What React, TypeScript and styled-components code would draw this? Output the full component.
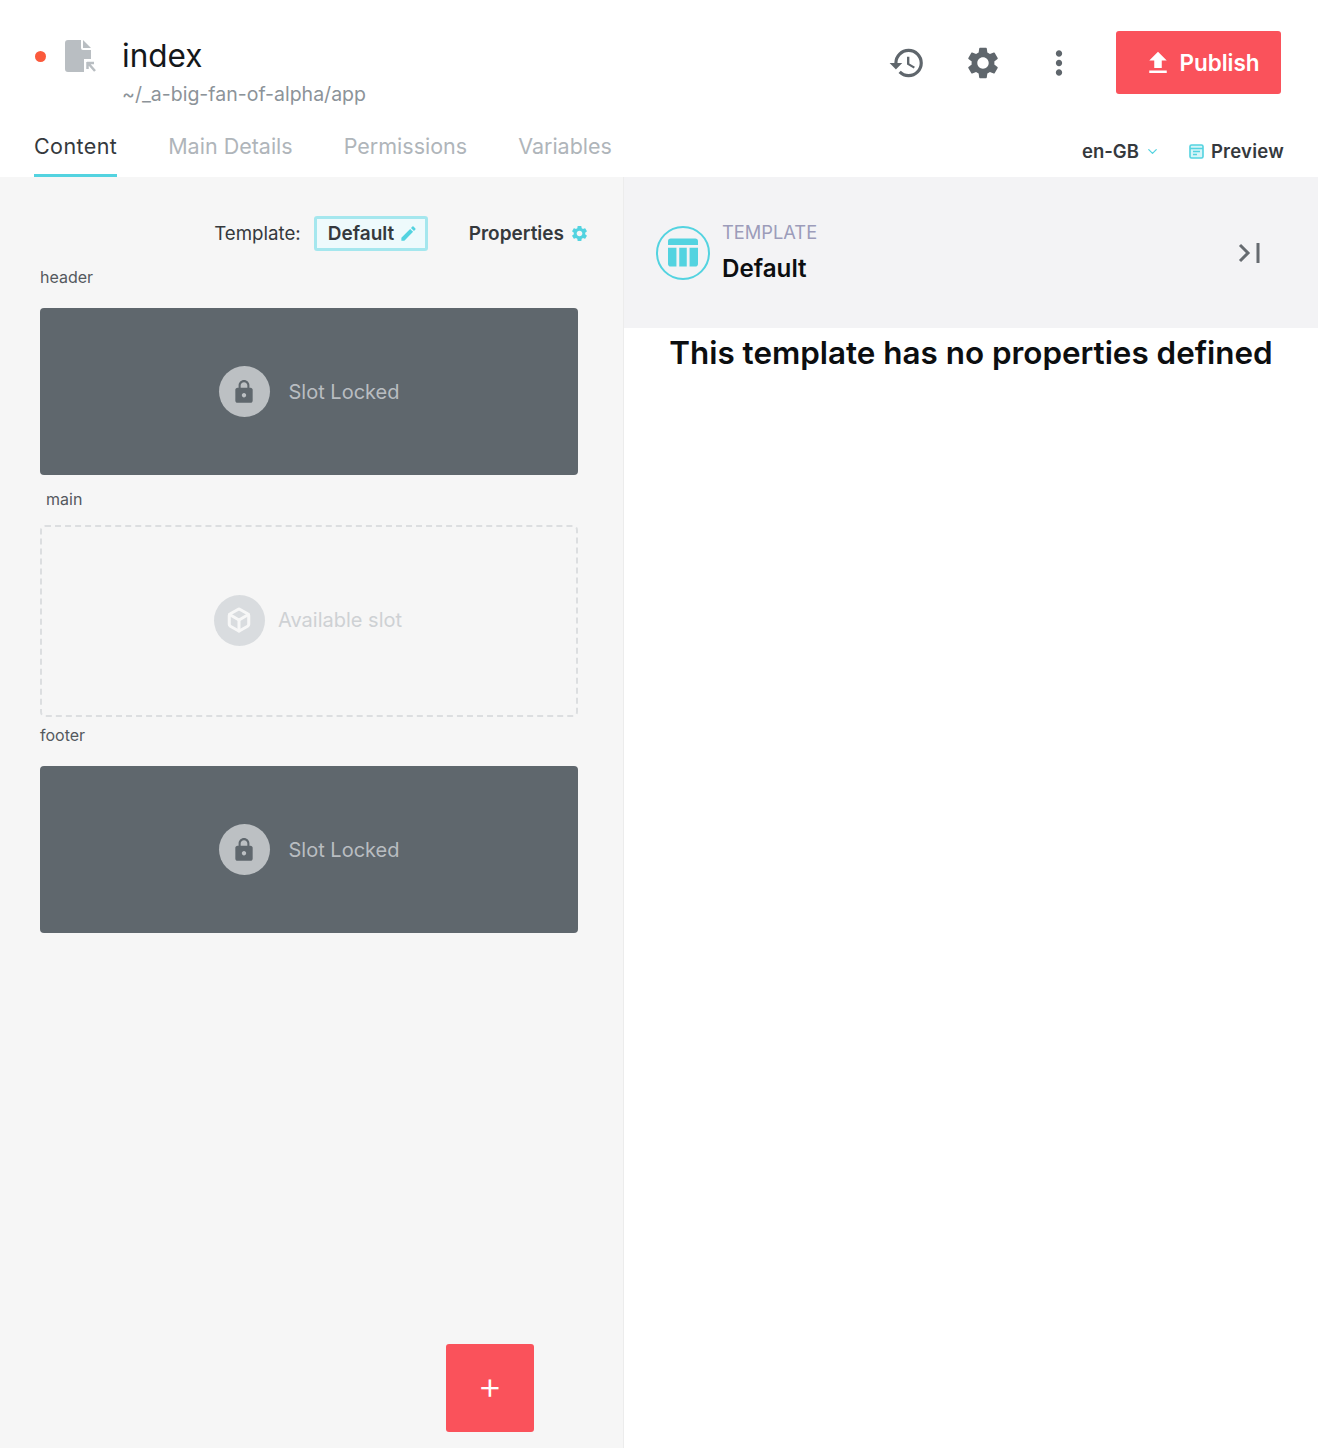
import { MdEdit, MdFileUpload, MdHistory, MdLock, MdMoreVert, MdSettings } from "react-icons/md";
import { FiBox, FiChevronDown } from "react-icons/fi";
import styled, { createGlobalStyle } from "styled-components";

const GlobalStyle = createGlobalStyle`
    html, body {
        margin: 0;
        padding: 0;
        background: #fff;
    }
    body {
        font-family: Inter, "Noto Sans", sans-serif;
        color: #35393d;
    }
`;

const Page = styled.div`
    display: flex;
    flex-direction: column;
    width: 1318px;
    height: 1448px;
    overflow: hidden;
`;

const Header = styled.header`
    display: flex;
    flex-direction: column;
    height: 177px;
    box-sizing: border-box;
    background: #fff;
`;

const TopRow = styled.div`
    display: flex;
    align-items: flex-start;
    height: 98px;
    padding: 31px 37px 0 35px;
    box-sizing: border-box;
`;

const Dot = styled.span`
    width: 11px;
    height: 11px;
    margin-top: 20px;
    border-radius: 50%;
    background: #fb5a3c;
`;

const FileIcon = styled.svg`
    width: 31px;
    height: 32px;
    margin: 9px 0 0 19px;
`;

const TitleBlock = styled.div`
    display: flex;
    flex-direction: column;
    margin-left: 26px;
`;

const Title = styled.h1`
    margin: 5px 0 0;
    font-size: 31.5px;
    line-height: 40px;
    font-weight: 400;
    color: #14171a;
`;

const Path = styled.div`
    margin-top: 7px;
    font-size: 19.5px;
    line-height: 22px;
    color: #8c9399;
`;

const Actions = styled.div`
    display: flex;
    align-items: center;
    margin-left: auto;
    height: 63px;
`;

const ActionIcon = styled.span`
    display: flex;
    justify-content: center;
    width: 38px;
    margin-right: 38px;
    color: #5f666c;
    font-size: 38px;
`;

const PublishButton = styled.button`
    display: flex;
    align-items: center;
    justify-content: center;
    gap: 6px;
    width: 165px;
    height: 63px;
    padding: 0 0 0 6px;
    border: 0;
    border-radius: 3px;
    background: #fa525b;
    color: #fff;
    font: 600 22.5px Inter, sans-serif;
    cursor: pointer;
`;

const TabRow = styled.div`
    display: flex;
    align-items: flex-start;
    height: 79px;
    padding: 0 34px;
`;

const Tab = styled.a<{ $active?: boolean }>`
    display: flex;
    align-items: center;
    height: 46px;
    margin: 33px 51px 0 0;
    padding-bottom: 13px;
    box-sizing: border-box;
    font-size: 21.5px;
    letter-spacing: ${(p) => (p.$active ? "0.4px" : "0")};
    color: ${(p) => (p.$active ? "#35393d" : "#afb5ba")};
    border-bottom: 3px solid ${(p) => (p.$active ? "#53d3e0" : "transparent")};
`;

const TabTools = styled.div`
    display: flex;
    align-items: center;
    margin-left: auto;
    height: 46px;
    margin-top: 30px;
    font-size: 18.5px;
    font-weight: 600;
    color: #35393d;
`;

const Locale = styled.span`
    display: flex;
    align-items: center;
    gap: 6px;
    margin-right: 29px;

    svg {
        color: #53d3e0;
        font-size: 15px;
    }
`;

const Preview = styled.span`
    display: flex;
    align-items: center;
    gap: 7px;
    letter-spacing: 0.25px;
`;

const Main = styled.main`
    display: flex;
    flex: 1;
    min-height: 0;
`;

const LeftPanel = styled.section`
    position: relative;
    width: 624px;
    box-sizing: border-box;
    padding: 39px 45px 0 40px;
    background: #f6f6f6;
    border-right: 1px solid #ececec;
`;

const TemplateBar = styled.div`
    display: flex;
    align-items: center;
    height: 35px;
    margin: 0 -11px 10px 0;
    justify-content: flex-end;
    font-size: 19px;
`;

const BarLabel = styled.span`
    margin: 0 13px 1px 0;
    font-size: 18.7px;
`;

const DefaultChip = styled.span`
    display: flex;
    align-items: center;
    gap: 5px;
    width: 114px;
    height: 35px;
    box-sizing: border-box;
    padding: 0 0 1px 11px;
    margin-right: 41px;
    border: 3px solid #a5e7ee;
    border-radius: 3px;
    background: #eefafc;
    font-weight: 600;

    svg {
        color: #53d3e0;
        font-size: 19px;
    }
`;

const Properties = styled.span`
    display: flex;
    align-items: center;
    gap: 6px;
    padding-bottom: 1px;
    font-weight: 600;

    svg {
        color: #53d3e0;
        font-size: 19px;
    }
`;

const SlotLabel = styled.div<{ $indent?: boolean; $gap: number }>`
    height: 32px;
    display: flex;
    align-items: center;
    margin-bottom: ${(p) => p.$gap}px;
    padding-left: ${(p) => (p.$indent ? "6px" : "0")};
    font-size: 16px;
    color: #54595e;
`;

const LockedSlot = styled.div`
    display: flex;
    align-items: center;
    justify-content: center;
    gap: 19px;
    height: 167px;
    margin: 0 0 8px;
    border-radius: 4px;
    background: #5f676d;
    color: #b9bdc1;
    font-size: 20px;
`;

const EmptySlot = styled.div`
    display: flex;
    align-items: center;
    justify-content: center;
    gap: 13px;
    height: 192px;
    box-sizing: border-box;
    margin: 0 0 2px;
    padding: 0 2px 2px 0;
    border: 2px dashed #dcdee0;
    border-radius: 5px;
    color: #ced1d4;
    font-size: 20px;
`;

const SlotBadge = styled.span<{ $muted?: boolean }>`
    display: flex;
    align-items: center;
    justify-content: center;
    width: 51px;
    height: 51px;
    border-radius: 50%;
    background: ${(p) => (p.$muted ? "#d9dcdf" : "#bcc0c3")};
    color: ${(p) => (p.$muted ? "#f7f7f7" : "#5f676d")};
    font-size: 26px;
`;

const CubeIcon = styled(FiBox)`
    stroke-width: 2.8;
`;

const AddButton = styled.button`
    position: absolute;
    left: 446px;
    bottom: 16px;
    display: flex;
    align-items: center;
    justify-content: center;
    width: 88px;
    height: 88px;
    padding: 0 0 6px;
    border: 0;
    border-radius: 3px;
    background: #fa525b;
    color: #fff;
    font: 300 38px Inter, sans-serif;
    line-height: 1;
    cursor: pointer;
`;

const RightPanel = styled.section`
    flex: 1;
    display: flex;
    flex-direction: column;
    min-width: 0;
`;

const TemplateHead = styled.div`
    display: flex;
    align-items: center;
    height: 151px;
    flex-shrink: 0;
    padding: 0 58px 0 32px;
    box-sizing: border-box;
    background: #f3f3f5;
`;

const TemplateIcon = styled.span`
    display: flex;
    align-items: center;
    justify-content: center;
    width: 54px;
    height: 54px;
    box-sizing: border-box;
    border: 2px solid #53d3e0;
    border-radius: 50%;
`;

const TemplateText = styled.div`
    display: flex;
    flex-direction: column;
    margin: -3px 0 0 12px;
`;

const TemplateCaption = styled.span`
    font-size: 18.3px;
    line-height: 22px;
    color: #9c9cba;
`;

const TemplateName = styled.strong`
    margin-top: 13px;
    font-size: 24.2px;
    line-height: 26px;
    font-weight: 600;
    color: #0c0e10;
`;

const CollapseIcon = styled.svg`
    width: 22px;
    height: 22px;
    margin-left: auto;
`;

const EmptyMessage = styled.h2`
    margin: 6px 0 0;
    text-align: center;
    font-size: 31.4px;
    line-height: 38px;
    font-weight: 600;
    color: #0c0e10;
`;

const LockedContent = () => (
    <LockedSlot>
        <SlotBadge><MdLock /></SlotBadge>
        <span>Slot Locked</span>
    </LockedSlot>
);

export default function App() {
    return (
        <Page>
            <GlobalStyle />
            <Header>
                <TopRow>
                    <Dot />
                    <FileIcon viewBox="0 0 31 32">
                        <path fill="#b9bec2" d="M3 0h13v8a2 2 0 0 0 2 2h8v9h-7v13H3a3 3 0 0 1-3-3V3a3 3 0 0 1 3-3z" />
                        <path fill="#b9bec2" d="M18 0l8 8h-8z" />
                        <path fill="none" stroke="#b9bec2" strokeWidth="2.500" d="M22 23h7M22.500 22v7M23 23l7 8" />
                    </FileIcon>
                    <TitleBlock>
                        <Title>index</Title>
                        <Path>~/_a-big-fan-of-alpha/app</Path>
                    </TitleBlock>
                    <Actions>
                        <ActionIcon><MdHistory /></ActionIcon>
                        <ActionIcon><MdSettings /></ActionIcon>
                        <ActionIcon><MdMoreVert /></ActionIcon>
                        <PublishButton><MdFileUpload size={30} />Publish</PublishButton>
                    </Actions>
                </TopRow>
                <TabRow>
                    <Tab $active>Content</Tab>
                    <Tab>Main Details</Tab>
                    <Tab>Permissions</Tab>
                    <Tab>Variables</Tab>
                    <TabTools>
                        <Locale>en-GB <FiChevronDown /></Locale>
                        <Preview>
                            <svg width="15" height="15" viewBox="0 0 15 15">
                                <rect x="1" y="1" width="13" height="13" rx="1.500" fill="#d6f5f8" stroke="#53d3e0" strokeWidth="1.600" />
                                <path d="M1 4.500h13M4 7.500h7M4 10.500h4" stroke="#53d3e0" strokeWidth="1.400" />
                            </svg>
                            Preview
                        </Preview>
                    </TabTools>
                </TabRow>
            </Header>
            <Main>
                <LeftPanel>
                    <TemplateBar>
                        <BarLabel>Template:</BarLabel>
                        <DefaultChip>Default <MdEdit /></DefaultChip>
                        <Properties>Properties <MdSettings /></Properties>
                    </TemplateBar>
                    <SlotLabel $gap={15}>header</SlotLabel>
                    <LockedContent />
                    <SlotLabel $indent $gap={10}>main</SlotLabel>
                    <EmptySlot>
                        <SlotBadge $muted><CubeIcon /></SlotBadge>
                        <span>Available slot</span>
                    </EmptySlot>
                    <SlotLabel $gap={15}>footer</SlotLabel>
                    <LockedContent />
                    <AddButton>+</AddButton>
                </LeftPanel>
                <RightPanel>
                    <TemplateHead>
                        <TemplateIcon>
                            <svg width="30" height="29" viewBox="0 0 32 30">
                                <path fill="#53d3e0" d="M3 0h26a3 3 0 0 1 3 3v4H0V3a3 3 0 0 1 3-3zM0 10h9v20H3a3 3 0 0 1-3-3zM12 10h8v20h-8zM23 10h9v17a3 3 0 0 1-3 3h-6z" />
                            </svg>
                        </TemplateIcon>
                        <TemplateText>
                            <TemplateCaption>TEMPLATE</TemplateCaption>
                            <TemplateName>Default</TemplateName>
                        </TemplateText>
                        <CollapseIcon viewBox="0 0 22 22">
                            <path d="M2 3l8 8-8 8M20 1v20" fill="none" stroke="#666b70" strokeWidth="3" />
                        </CollapseIcon>
                    </TemplateHead>
                    <EmptyMessage>This template has no properties defined</EmptyMessage>
                </RightPanel>
            </Main>
        </Page>
    );
}
